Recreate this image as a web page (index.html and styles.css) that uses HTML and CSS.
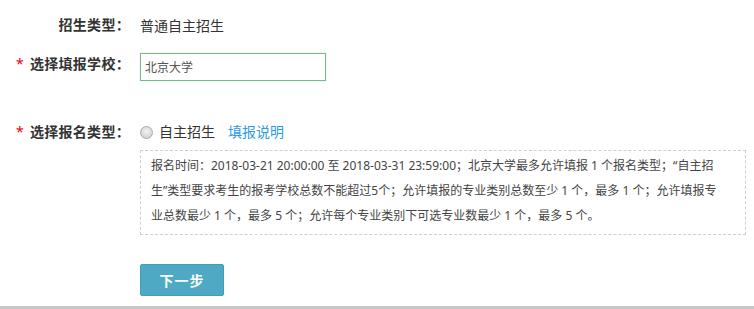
FILE: index.html
```html
<!DOCTYPE html>
<html lang="zh-CN">
<head>
<meta charset="utf-8">
<title>报名</title>
<link rel="stylesheet" href="styles.css">
</head>
<body>
<div class="page">
  <form class="form">
    <div class="row row-type">
      <label class="label">招生类型：</label>
      <div class="value">普通自主招生</div>
    </div>
    <div class="row row-school">
      <label class="label"><span class="req">*</span>选择填报学校：</label>
      <div class="value"><input class="input" type="text" value="北京大学"></div>
    </div>
    <div class="row row-kind">
      <label class="label"><span class="req">*</span>选择报名类型：</label>
      <div class="value">
        <div class="choice">
          <span class="radio"></span>
          <span class="choice-text">自主招生</span>
          <a class="link" href="#">填报说明</a>
        </div>
        <div class="notice">报名时间：2018-03-21 20:00:00 至 2018-03-31 23:59:00；北京大学最多允许填报 1 个报名类型；“自主招<br>生”类型要求考生的报考学校总数不能超过5个；允许填报的专业类别总数至少 1 个，最多 1 个；允许填报专<br>业总数最少 1 个，最多 5 个；允许每个专业类别下可选专业数最少 1 个，最多 5 个。</div>
      </div>
    </div>
    <div class="row row-btn">
      <div class="label"></div>
      <div class="value"><button class="btn" type="button">下一步</button></div>
    </div>
  </form>
  <div class="footer-line"></div>
</div>
</body>
</html>
```
FILE: styles.css
```css
* { box-sizing: border-box; }
html, body { margin: 0; padding: 0; background: #fff; }
body {
  font-family: "Noto Sans", "Noto Sans CJK SC", sans-serif;
  color: #333;
  font-size: 14px;
}
.page { width: 754px; height: 309px; overflow: hidden; }
.form { padding-top: 15px; height: 306px; }
.row { display: flex; align-items: flex-start; gap: 10px; }
.label {
  width: 130px;
  flex: none;
  text-align: right;
  font-weight: bold;
  font-size: 14px;
  line-height: 20px;
  color: #333;
  white-space: nowrap;
  letter-spacing: 0.3px;
}
.req { color: #e60012; font-weight: normal; margin-right: 6px; }
.value { flex: 1; line-height: 20px; }
.row-type .value { padding-top: 1px; }
.row-school { margin-top: 17px; }
.row-school .label { padding-top: 1px; }
.input {
  display: block;
  width: 186px;
  height: 28px;
  border: 1px solid #7db97d;
  box-shadow: 0 0 2px #cfe9f7;
  padding: 0 4px;
  font-family: inherit;
  font-size: 12px;
  color: #555;
  outline: none;
}
.row-kind { margin-top: 41px; }
.choice { display: flex; align-items: center; height: 20px; }
.radio {
  width: 13px; height: 13px; border-radius: 50%;
  border: 1px solid #a9a9a9;
  background: radial-gradient(circle at 50% 40%, #f2f2f2 0%, #d6d6d6 70%, #c4c4c4 100%);
  margin-right: 6px;
}
.choice-text { color: #333; }
.link { color: #2a9be6; text-decoration: none; margin-left: 13px; }
.notice {
  margin-top: 8px;
  width: 606px;
  border: 1px dashed #cfcfcf;
  padding: 2px 10px 6px;
  font-size: 12px;
  line-height: 25px;
  color: #444;
  white-space: nowrap;
}
.row-btn { margin-top: 29px; }
.btn {
  width: 84px; height: 32px;
  background: #4eaac4;
  border: 1px solid #449bb3;
  border-radius: 2px;
  color: #fff;
  font-family: inherit;
  font-size: 14px;
  font-weight: bold;
  letter-spacing: 1px;
  padding: 0;
}
.footer-line { height: 3px; background: #c8c8c8; }
```
